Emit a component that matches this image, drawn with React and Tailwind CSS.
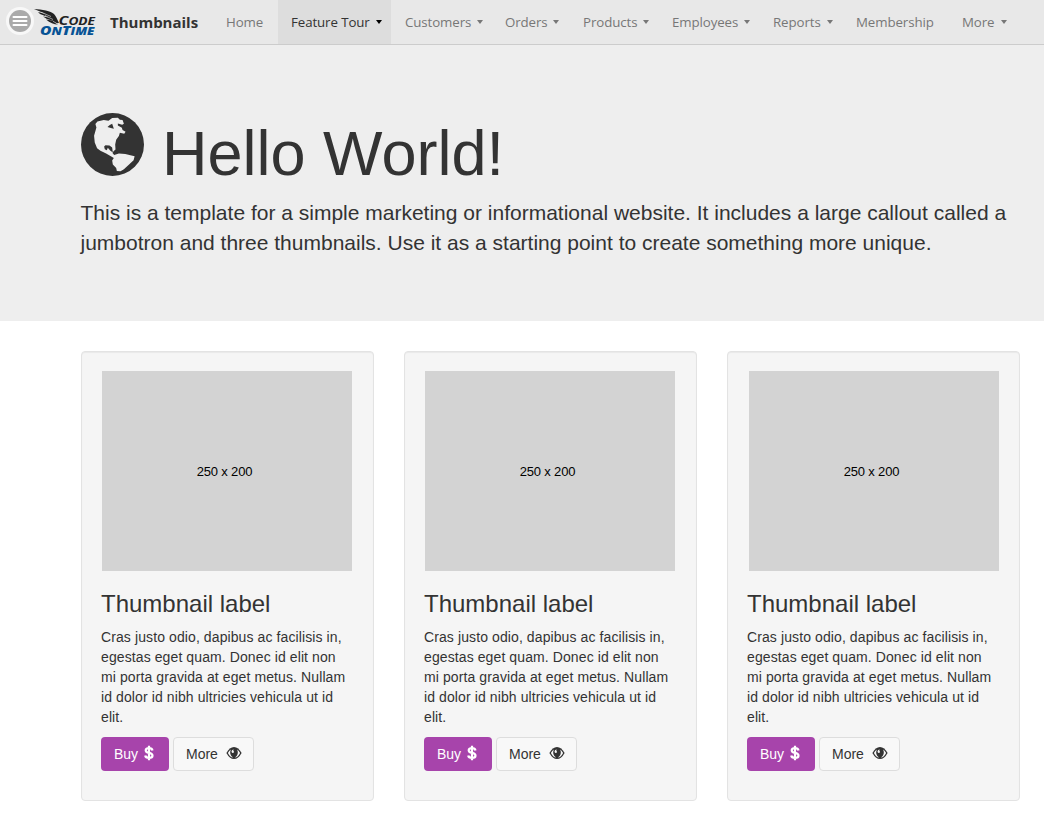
import React from "react";

const items = [
  { label: "Home", box: "w-[66px] pl-[14px]" },
  { label: "Feature Tour", box: "w-[113px] pl-[13px] bg-[#dddddd] text-[#333]", caret: "left-[98px] border-t-black" },
  { label: "Customers", box: "w-[100px] pl-[14px]", caret: "left-[86px] border-t-[#777]" },
  { label: "Orders", box: "w-[78px] pl-[14px]", caret: "left-[62px] border-t-[#777]" },
  { label: "Products", box: "w-[90px] pl-[14px]", caret: "left-[74px] border-t-[#777]" },
  { label: "Employees", box: "w-[101px] pl-[13px]", caret: "left-[85px] border-t-[#777]" },
  { label: "Reports", box: "w-[83px] pl-[13px]", caret: "left-[67px] border-t-[#777]" },
  { label: "Membership", box: "w-[105px] pl-[13px]" },
  { label: "More", box: "w-[62px] pl-[14px]", caret: "left-[53px] border-t-[#777]" },
];

const cards = [
  { id: 1, image: "ml-[1px]" },
  { id: 2, image: "ml-[1px]" },
  { id: 3, image: "ml-[2px]" },
];

function Logo() {
  return (
    <svg className="mt-[8px] h-[30px] w-[64px] shrink-0" viewBox="0 0 64 30">
      <path d="M0 1C8 1.5 17 3 20 6C22 8 23 11 25 15C23 15.5 21 14.5 19.5 13L13 11L9 8.5L15 9.5L6 6L4 4L12 6Z" fill="#222" />
      <path d="M12 11.5L18 12.5L22 15.5L24 16.5C20 16.5 16 15 12 11.5Z" fill="#222" />
      <path d="M7 4.2L17 8.5M11 7.5L19 11.5" stroke="#e8e8e8" strokeWidth="0.6" />
      <text x="24.5" y="16.5" fontFamily="Open Sans" fontWeight="700" fontStyle="italic" fontSize="13" fill="#222" textLength="36.5" lengthAdjust="spacingAndGlyphs">C<tspan fontSize="11">ODE</tspan></text>
      <text x="6" y="27.2" fontFamily="Open Sans" fontWeight="800" fontStyle="italic" fontSize="12.8" fill="#075395" textLength="54.5" lengthAdjust="spacingAndGlyphs">O<tspan fontSize="10.8">N</tspan>T<tspan fontSize="10.8">IME</tspan></text>
    </svg>
  );
}

function Globe() {
  return (
    <svg className="mt-[68px] h-[63px] w-[63px] shrink-0" viewBox="33 39 188 188">
      <circle cx="127" cy="133" r="94" fill="#333" />
      <path d="M76 72L82 64L101 60L115 62L126 54L143 53L149 59L157 60L161 71L156 74L143 70L143 76L155 83L157 90L166 95L162 101L149 98L146 108L138 119L135 133L136 148L130 153L127 158L132 164L146 160L165 161L193 168L190 180L178 191L161 207L151 213L140 212L138 203L128 193L126 181L131 173L108 160L91 152L81 144L74 127L72 107L79 82Z" fill="#eee" />
      <path d="M112 81L119 75L126 71L131 86L122 84ZM102 139L106 135L118 136L126 142L128 157L120 151L113 143L110 150L104 147Z" fill="#333" />
    </svg>
  );
}

function Eye() {
  return (
    <svg className="h-[14px] w-[16px]" viewBox="0 0 16 14">
      <path d="M.4 7Q3.6 1 8 1Q12.4 1 15.6 7Q12.4 13 8 13Q3.6 13 .4 7Z" fill="#333" />
      <path d="M1.9 7Q3.1 4.8 4.8 3.6Q2.8 8.6 7.1 11.6Q3.8 11.2 1.9 7ZM14.1 7Q12.9 4.8 11.2 3.6Q13.2 8.6 8.9 11.6Q12.2 11.2 14.1 7Z" fill="#f8f8f8" />
      <path d="M5.5 5.2Q6 3.3 7.7 3.4Q6.7 4.4 8 5.7Q7.7 7.2 6.7 7Q5.6 6.8 5.5 5.2Z" fill="#f8f8f8" />
    </svg>
  );
}

function Card({ image }) {
  return (
    <article className="h-[450px] flex-1 rounded-[4px] border border-[#e3e3e3] bg-[#f5f5f5] px-[19px] pt-[19px] text-[14px] leading-[20px] shadow-[inset_0_1px_1px_rgba(0,0,0,0.05)]">
      <div className={`flex h-[200px] w-[250px] items-center justify-center bg-[#d3d3d3] pr-[5px] pt-px text-[13px] tracking-[-0.18px] text-black ${image}`}>250 x 200</div>
      <h3 className="mt-[20px] text-[24px] leading-[26px]">Thumbnail label</h3>
      <p className="mt-[10px] whitespace-nowrap tracking-[0.1px]">
        Cras justo odio, dapibus ac facilisis in,<br />egestas eget quam. Donec id elit non<br />mi porta gravida at eget metus. Nullam<br />id dolor id nibh ultricies vehicula ut id<br />elit.
      </p>
      <div className="mt-[10px] flex gap-[4px]">
        <button className="flex h-[34px] w-[68px] items-center rounded-[4px] bg-[#a744ab] pl-[13px] text-white">
          Buy
          <svg className="mb-[2px] ml-[6px] h-[16px] w-[10px]" viewBox="0 0 10 16">
            <path d="M8.5 5.4Q8 3.2 5 3.2Q1.7 3.2 1.7 5.2Q1.7 7.2 5 7.8Q8.5 8.6 8.5 10.7Q8.5 12.9 5 12.9Q1.6 12.9 1.2 10.5M5 .8V15.2" fill="none" stroke="white" strokeWidth="2.2" />
          </svg>
        </button>
        <button className="flex h-[34px] w-[81px] items-center rounded-[4px] border border-[#ddd] bg-[#f8f8f8] pl-[12px]">
          More<span className="mb-[2px] ml-[8px]"><Eye /></span>
        </button>
      </div>
    </article>
  );
}

export default function App() {
  return (
    <div className="h-[840px] w-[1044px] overflow-hidden bg-white font-['Liberation_Sans',sans-serif] text-[#333]">
      <header className="flex h-[45px] border-b border-[#ccc] bg-[#e8e8e8] font-['Open_Sans',sans-serif]">
        <button className="ml-[6px] mt-[7px] flex h-[28px] w-[28px] shrink-0 items-center justify-center rounded-full bg-[#f8f8f8]">
          <svg className="h-[22px] w-[22px]" viewBox="0 0 22 22"><circle cx="11" cy="11" r="11" fill="#aaa" /><path d="M4.5 7H17.5M4.5 11H17.5M4.5 15H17.5" stroke="white" strokeWidth="2" strokeLinecap="round" /></svg>
        </button>
        <Logo />
        <div className="ml-[12px] w-[102px] shrink-0 whitespace-nowrap text-[15px] font-bold leading-[44px]">Thumbnails</div>
        <nav className="flex text-[13.3px] leading-[44px] tracking-[-0.1px] text-[#777]">
          {items.map((item) => (
            <a key={item.label} className={`relative h-[44px] shrink-0 whitespace-nowrap ${item.box}`}>
              {item.label}
              {item.caret && <i className={`absolute top-[20px] h-0 w-0 border-x-[3.5px] border-t-[4px] border-x-transparent ${item.caret}`} />}
            </a>
          ))}
        </nav>
      </header>
      <section className="h-[276px] bg-[#eee] pl-[81px]">
        <div className="flex h-[153px]">
          <Globe />
          <h1 className="ml-[18px] mt-[73px] whitespace-nowrap text-[63px] leading-[70px]">Hello World!</h1>
        </div>
        <p className="-ml-[0.5px] whitespace-nowrap text-[21px] leading-[30px]">This is a template for a simple marketing or informational website. It includes a large callout called a<br />jumbotron and three thumbnails. Use it as a starting point to create something more unique.</p>
      </section>
      <main className="ml-[81px] mt-[30px] flex w-[939px] gap-[30px]">
        {cards.map((card) => <Card key={card.id} image={card.image} />)}
      </main>
    </div>
  );
}
